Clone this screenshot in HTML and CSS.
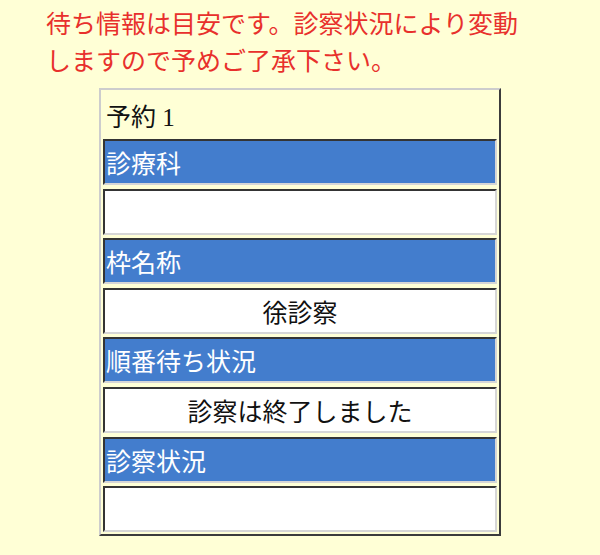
FILE: index.html
```html
<!DOCTYPE html>
<html lang="ja">
<head>
  <meta charset="UTF-8" />
  <meta name="viewport" content="width=device-width, initial-scale=1.0" />
  <title>待ち情報</title>
  <link rel="stylesheet" href="styles.css">
</head>
<body>

  <div class="notice">待ち情報は目安です。診察状況により変動しますので予めご了承下さい。</div>

  <div class="status">
    <div class="title">予約 1</div>
    <div class="cell head">診療科</div>
    <div class="cell value"></div>
    <div class="cell head">枠名称</div>
    <div class="cell value">徐診察</div>
    <div class="cell head">順番待ち状況</div>
    <div class="cell value">診察は終了しました</div>
    <div class="cell head">診察状況</div>
    <div class="cell value"></div>
  </div>

</body>
</html>
```

FILE: styles.css
```css
body {
  font-family: 'Liberation Serif', 'Noto Sans CJK JP', serif;
  background-color: #ffffd6;
  margin: 0;
  padding: 0;
  color: #111;
}
.notice {
  width: 490px;
  margin-left: 46px;
  padding-top: 6px;
  font-size: 25px;
  line-height: 37px;
  color: #e8302c;
}
.status {
  width: 402px;
  box-sizing: border-box;
  margin: 8px auto 0;
  padding: 0 2px 2px;
  border: 2px solid;
  border-color: #cdcdcd #3c3c3c #3c3c3c #cdcdcd;
  display: flex;
  flex-direction: column;
  gap: 3.6px;
  font-size: 25px;
}
.title {
  height: 49px;
  display: flex;
  align-items: center;
  padding-left: 3px;
  margin-bottom: -3.6px;
}
.cell {
  height: 46px;
  box-sizing: border-box;
  display: flex;
  align-items: center;
  border: 2px solid;
  border-color: #343434 #d6d6d6 #d6d6d6 #343434;
}
.head {
  background-color: #437dcd;
  color: #fff;
  padding-left: 1px;
}
.value {
  background-color: #fff;
  justify-content: center;
}
```
